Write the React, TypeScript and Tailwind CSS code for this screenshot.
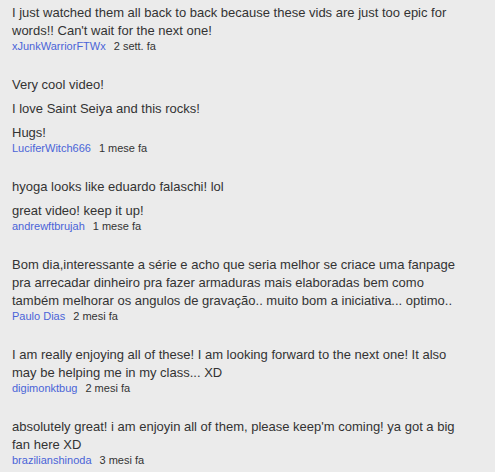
const comments = [
  {
    text: [
      "I just watched them all back to back because these vids are just too epic for words!! Can't wait for the next one!",
    ],
    user: "xJunkWarriorFTWx",
    time: "2 sett. fa",
  },
  {
    text: ["Very cool video!", "I love Saint Seiya and this rocks!", "Hugs!"],
    user: "LuciferWitch666",
    time: "1 mese fa",
  },
  {
    text: ["hyoga looks like eduardo falaschi! lol", "great video! keep it up!"],
    user: "andrewftbrujah",
    time: "1 mese fa",
  },
  {
    text: [
      "Bom dia,interessante a série e acho que seria melhor se criace uma fanpage pra arrecadar dinheiro pra fazer armaduras mais elaboradas bem como também melhorar os angulos de gravação.. muito bom a iniciativa... optimo..",
    ],
    user: "Paulo Dias",
    time: "2 mesi fa",
  },
  {
    text: [
      "I am really enjoying all of these! I am looking forward to the next one! It also may be helping me in my class... XD",
    ],
    user: "digimonktbug",
    time: "2 mesi fa",
  },
  {
    text: [
      "absolutely great! i am enjoyin all of them, please keep'm coming! ya got a big fan here XD",
    ],
    user: "brazilianshinoda",
    time: "3 mesi fa",
  },
];

export default function App() {
  return (
    <div className="w-[495px] h-[472px] overflow-hidden bg-[#ebebeb] font-['Liberation_Sans',Arial,sans-serif] text-[#333]">
      <div className="flex flex-col gap-[23px] pl-3 pt-[4px] w-[467px]">
        {comments.map((c) => (
          <div key={c.user}>
            <div className="flex flex-col gap-[6px]">
              {c.text.map((t) => (
                <p key={t} className="text-[13px] leading-[18px]">
                  {t}
                </p>
              ))}
            </div>
            <div className="text-[11px] leading-[13px]">
              <span className="text-[#4a64d8]">{c.user}</span>
              <span className="ml-2">{c.time}</span>
            </div>
          </div>
        ))}
      </div>
    </div>
  );
}
